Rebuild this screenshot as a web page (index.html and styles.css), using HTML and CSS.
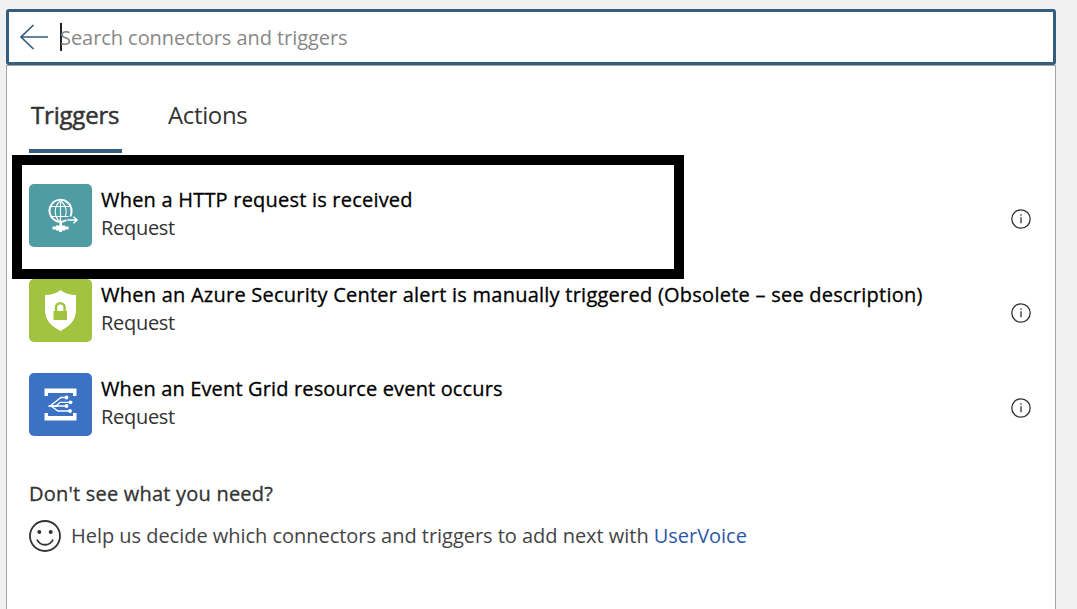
FILE: index.html
```html
<!DOCTYPE html>
<html lang="en">
<head>
<meta charset="utf-8">
<title>Choose a trigger</title>
<link rel="stylesheet" href="styles.css">
</head>
<body>
<main class="picker">
  <div class="search">
    <svg class="back" width="30" height="28" viewBox="0 0 30 28"><path d="M29 14H2M14.500 2 2 14 14.500 26"/></svg>
    <span class="caret"></span>
    <span class="placeholder">Search connectors and triggers</span>
  </div>
  <section class="panel">
    <nav class="tabs">
      <a class="tab tab-active"><span class="tab-label triggers">Triggers</span></a>
      <a class="tab"><span class="tab-label actions">Actions</span></a>
    </nav>
    <ul class="list">
      <li class="row">
        <span class="highlight"></span>
        <svg class="icon teal" viewBox="0 0 63 63">
          <g fill="none" stroke="#fff" stroke-width="1.1">
            <path stroke-width="2" d="M37.500 36A11 11 0 1 1 42.500 27.500q0 2.500-1 5"/>
            <path d="M31.500 17c-7 5-7 16 0 21M31.500 17c6 4.500 7 11 4.500 16M22 22.500h19M21.500 32.500h18M31.500 17v21"/>
            <path stroke-width="1.500" d="M38.500 36h9.500M44.500 32.800l3.500 3.200-3.500 3.200"/>
          </g>
          <path fill="#fff" d="M30.500 38h2.500v3.500h3v1h3.500v3H36v1h-3V48h-3v-1.500h-3v-1h-3.500v-3H27v-1h3.500z"/>
        </svg>
        <div class="text"><span class="title t1">When a HTTP request is received</span><span class="sub">Request</span></div>
        <svg class="info" viewBox="0 0 20 20"><circle cx="10" cy="10" r="9.200"/><path d="M10 8.200v6M10 5.300v1.500"/></svg>
      </li>
      <li class="row">
        <svg class="icon green" viewBox="0 0 63 63">
          <path fill="#fff" d="M31.500 11c4 3.500 9 5 15.500 5v15c0 10-6 16-15.500 21C22 47 16 41 16 31V16c6.500 0 11.500-1.500 15.500-5z"/>
          <path fill="#a1c340" d="M24.500 32H38v9H24.500z"/><path fill="none" stroke="#a1c340" stroke-width="2.500" d="M27 33v-4.500a4.300 4.300 0 0 1 8.600 0V33"/>
        </svg>
        <div class="text"><span class="title t2">When an Azure Security Center alert is manually triggered (Obsolete – see description)</span><span class="sub">Request</span></div>
        <svg class="info" viewBox="0 0 20 20"><circle cx="10" cy="10" r="9.200"/><path d="M10 8.200v6M10 5.300v1.500"/></svg>
      </li>
      <li class="row">
        <svg class="icon blue" viewBox="0 0 63 63">
          <path fill="#fff" d="M15.500 15.500h32V23H44v-3H19v3h-3.500zM15.500 40H19v3h25v-3h3.500v7.500h-32z"/>
          <path fill="none" stroke="#fff" stroke-width="1.300" d="M37 24.500h-5L21 33M41 29.300H31l-4 3.700M20 33h17M22 33l7 5h12"/>
          <path fill="#fff" d="M19.500 32.200h9v1.800h-9z"/>
          <g fill="#fff"><circle cx="37.500" cy="24.500" r="1.900"/><circle cx="41.500" cy="29.300" r="1.900"/><circle cx="37.500" cy="33" r="1.900"/><circle cx="41" cy="38" r="1.900"/></g>
        </svg>
        <div class="text"><span class="title t3">When an Event Grid resource event occurs</span><span class="sub">Request</span></div>
        <svg class="info" viewBox="0 0 20 20"><circle cx="10" cy="10" r="9.200"/><path d="M10 8.200v6M10 5.300v1.500"/></svg>
      </li>
    </ul>
    <footer class="help">
      <p class="question">Don't see what you need?</p>
      <p class="feedback">
        <svg class="smile" viewBox="0 0 32 32"><circle cx="16" cy="16" r="15"/><path d="M8 19.500c3 7 13 7 16 0"/><g fill="#333" stroke="none"><circle cx="10.300" cy="12" r="2"/><circle cx="21.700" cy="12" r="2"/></g></svg>
        <span class="help-text">Help us decide which connectors and triggers to add next with <a class="link">UserVoice</a></span>
      </p>
    </footer>
  </section>
</main>
</body>
</html>
```
FILE: styles.css
```css
* { box-sizing: border-box; }
body { margin: 0; height: 609px; overflow: hidden; background: #f1f1f1; font-family: "Open Sans", "Noto Sans", sans-serif; font-size: 20px; color: #333; white-space: nowrap; }
.picker { display: flex; flex-direction: column; width: 1050px; height: 609px; margin-left: 6px; padding-top: 9px; }
.search { display: flex; align-items: center; flex: none; height: 56px; padding: 0 11px 0 10px; background: #fff; border: 3px solid #355d7d; border-radius: 3px; }
.back { flex: none; fill: none; stroke: #355d7d; stroke-width: 1.7; }
.caret { flex: none; width: 2px; height: 28px; margin: 0 -2px 0 11px; background: #222; }
.placeholder { color: #888; line-height: 28px; padding-top: 2px; letter-spacing: -.06px; }
.panel { flex: 1; background: #fff; border: 1px solid #a3a3a3; border-bottom: 0; padding: 0 24px 0 22px; }
.tabs { display: flex; gap: 44px; height: 87px; }
.tab { display: flex; align-items: center; padding: 14px 2px 0; border-bottom: 4px solid transparent; font-size: 24px; }
.tab-active { width: 93px; border-color: #355d7d; -webkit-text-stroke: .5px; }
.tab-label { line-height: 32px; }
.triggers { letter-spacing: -.2px; }
.actions { letter-spacing: -.36px; }
.list { list-style: none; margin: 31px 0 0; padding: 0; }
.row { display: flex; position: relative; height: 94.5px; }
.icon { flex: none; width: 63px; height: 63px; border-radius: 5px; }
.teal { background: #4f9ca4; }
.green { background: #a1c340; }
.blue { background: #3c72c4; }
.text { display: flex; flex-direction: column; flex: 1; margin-left: 9px; padding-top: 2px; line-height: 28px; }
.title { color: #000; -webkit-text-stroke: .3px; }
.t1 { letter-spacing: .21px; }
.t2 { letter-spacing: .245px; }
.t3 { letter-spacing: .15px; }
.sub { letter-spacing: -.3px; }
.info { flex: none; width: 20px; height: 20px; margin: 24.5px .5px 0 0; fill: none; stroke: #333; stroke-width: 1.3; }
.highlight { position: absolute; left: -17px; top: -29px; width: 672px; height: 124px; border: 10px solid #000; z-index: 1; }
.help { margin-top: 12px; }
.question { margin: 0; line-height: 28px; letter-spacing: .21px; -webkit-text-stroke: .3px; }
.feedback { display: flex; align-items: center; margin: 12px 0 0; height: 32px; }
.smile { flex: none; width: 32px; height: 32px; margin-right: 10px; fill: none; stroke: #333; stroke-width: 1.8; }
.help-text { letter-spacing: -.03px; color: #444; }
.link { color: #2b57a8; }
```
